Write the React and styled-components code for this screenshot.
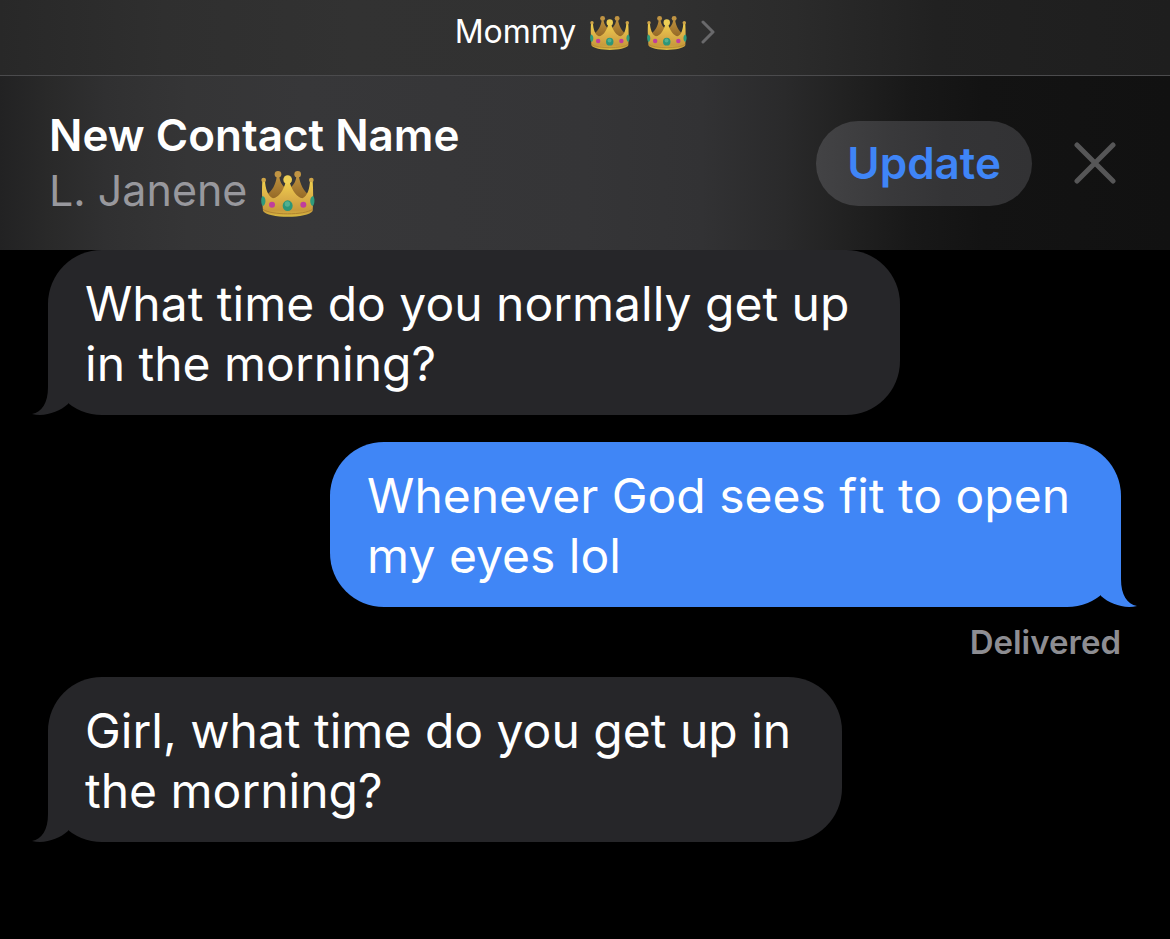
import React from 'react'
import styled, { createGlobalStyle } from 'styled-components'

const messages = [
  { id: 1, mine: false, text: 'What time do you normally get up\nin the morning?' },
  { id: 2, mine: true, text: 'Whenever God sees fit to open\nmy eyes lol', status: 'Delivered' },
  { id: 3, mine: false, text: 'Girl, what time do you get up in\nthe morning?' }
]

const Crown = ({ size }) => (
  <CrownSvg $size={size} viewBox="18 18 162 139" role="img" aria-label="crown">
    <defs>
      <linearGradient id="crownFront" x1="0" y1="0" x2="0" y2="1">
        <stop offset="0" stopColor="#f0d04c" />
        <stop offset="0.45" stopColor="#dcb048" />
        <stop offset="0.82" stopColor="#c89a3c" />
        <stop offset="1" stopColor="#d8ba40" />
      </linearGradient>
      <linearGradient id="crownBack" x1="0" y1="0" x2="0" y2="1">
        <stop offset="0" stopColor="#bc8f3c" />
        <stop offset="1" stopColor="#8f6424" />
      </linearGradient>
    </defs>
    <path d="M36 88 C52 78 62 58 65 36 L73 36 C76 54 84 66 98 72 C112 66 121 54 124 36 L132 36 C136 58 146 78 160 88 L150 108 H48 Z" fill="url(#crownBack)" />
    <circle cx="69" cy="28" r="10" fill="#c09443" />
    <circle cx="128" cy="28" r="10" fill="#c09443" />
    <path d="M22 48 H30 C31 68 38 94 54 100 C72 98 85 76 92 52 H104 C111 76 126 98 142 100 C158 94 164 68 165 48 H173 C175 78 175 108 173 138 C160 161 37 161 24 138 C21 108 20 78 22 48 Z" fill="url(#crownFront)" />
    <path d="M24 133 C48 151 148 151 173 133" fill="none" stroke="#b08430" strokeWidth="3" />
    <circle cx="26" cy="45" r="7" fill="#cfa548" />
    <circle cx="169" cy="45" r="7" fill="#cfa548" />
    <circle cx="98" cy="44" r="13" fill="#edcf55" />
    <path d="M23 93 C34 96 34 119 24 123 C17 118 17 97 23 93Z" fill="#2f9a7c" />
    <path d="M174 93 C163 96 163 119 173 123 C180 118 180 97 174 93Z" fill="#2f9a7c" />
    <circle cx="51" cy="119" r="9" fill="#c03e9c" />
    <circle cx="145" cy="119" r="9" fill="#c03e9c" />
    <ellipse cx="98" cy="122" rx="15" ry="16" fill="#2d9678" />
    <ellipse cx="97" cy="117" rx="8" ry="8" fill="#52b08f" />
  </CrownSvg>
)

const Message = ({ mine, text, status }) => (
  <MessageItem $mine={mine}>
    <Bubble $mine={mine}>
      {text}
      <Tail $mine={mine} viewBox="0 0 36 60" aria-hidden="true">
        <path d="M16 0 V32 C16 48 10 57 0 59 C13 62 27 57 36 49 V0 Z" fill="currentColor" />
      </Tail>
    </Bubble>
    {status && <Status>{status}</Status>}
  </MessageItem>
)

const App = () => (
  <>
    <GlobalStyle />
    <header>
      <TopBar>
        <ContactButton type="button">
          Mommy
          <Crowns>
            <Crown size={40} />
            <Crown size={40} />
          </Crowns>
          <Chevron viewBox="0 0 14 24" aria-hidden="true">
            <path d="M2 2 L12 12 L2 22" />
          </Chevron>
        </ContactButton>
      </TopBar>
      <Banner>
        <BannerText>
          <Title>New Contact Name</Title>
          <Subtitle>
            L. Janene
            <Crown size={54} />
          </Subtitle>
        </BannerText>
        <UpdateButton type="button">Update</UpdateButton>
        <CloseButton type="button" aria-label="Close">
          <CloseIcon viewBox="0 0 42 42" aria-hidden="true">
            <path d="M3 3 L39 39 M39 3 L3 39" />
          </CloseIcon>
        </CloseButton>
      </Banner>
    </header>
    <Thread>
      {messages.map(({ id, ...message }) => (
        <Message key={id} {...message} />
      ))}
    </Thread>
  </>
)

export default App

const GlobalStyle = createGlobalStyle`
  * {
    box-sizing: border-box;
  }
  body {
    margin: 0;
    background-color: #000;
    color: #fff;
    font-family: Inter, "Liberation Sans", sans-serif;
  }
  button {
    border: none;
    padding: 0;
    background: none;
    color: inherit;
    font-family: inherit;
    cursor: pointer;
  }
`
const TopBar = styled.div`
  display: flex;
  justify-content: center;
  padding: 12px 0 24px;
  border-bottom: solid 1px #4b4b4d;
  background: linear-gradient(90deg, #282828 0%, #2f2f2f 14%, #323232 30%, #313131 55%, #2b2b2b 68%, #212121 80%, #1e1e1e 100%);
`
const ContactButton = styled.button`
  display: flex;
  align-items: center;
  height: 39px;
  font-size: 32px;
  line-height: 39px;
`
const Crowns = styled.span`
  display: flex;
  gap: 17px;
  margin: 4px 14px 0;
`
const CrownSvg = styled.svg`
  display: block;
  flex: none;
  width: ${({ $size }) => $size}px;
  height: auto;
`
const Chevron = styled.svg`
  width: 14px;
  height: 24px;
  fill: none;
  stroke: #69696b;
  stroke-width: 3;
  stroke-linecap: round;
  stroke-linejoin: round;
`
const Banner = styled.div`
  display: flex;
  align-items: center;
  min-height: 174px;
  padding: 0 54px 0 49px;
  background: linear-gradient(90deg, #222223 0%, #292929 4%, #303031 9%, #353536 16%, #373739 26%, #353537 50%, #323234 60%, #2a2a2b 67%, #202020 73%, #181818 78%, #131313 84%, #111 100%);
`
const BannerText = styled.div`
  flex: 1;
`
const Title = styled.h1`
  margin: 0;
  font-size: 44px;
  font-weight: 600;
  line-height: 55px;
`
const Subtitle = styled.p`
  display: flex;
  align-items: center;
  gap: 14px;
  height: 55px;
  margin: 0;
  color: #98989d;
  font-size: 43px;
  line-height: 55px;

  ${CrownSvg} {
    margin-top: 8px;
  }
`
const UpdateButton = styled.button`
  height: 85px;
  padding: 0 31px;
  border-radius: 43px;
  background: linear-gradient(90deg, #434345, #39393b 35%, #343436 60%, #323234);
  && {
    color: #3f85f7;
  }
  font-size: 44px;
  font-weight: 600;
`
const CloseButton = styled.button`
  display: flex;
  margin-left: 42px;
`
const CloseIcon = styled.svg`
  width: 42px;
  height: 42px;
  fill: none;
  stroke: #565657;
  stroke-width: 5;
  stroke-linecap: round;
`
const Thread = styled.main`
  display: flex;
  flex-direction: column;
  padding: 0 49px 0 48px;
`
const MessageItem = styled.div`
  display: flex;
  flex-direction: column;
  align-items: ${({ $mine }) => ($mine ? 'flex-end' : 'flex-start')};
  margin-bottom: ${({ $mine }) => ($mine ? 15 : 27)}px;
`
const Bubble = styled.div`
  position: relative;
  padding: 24px 51px 21px 37px;
  border-radius: 54px;
  background-color: ${({ $mine }) => ($mine ? '#4086f6' : '#262629')};
  font-size: 48px;
  line-height: 60px;
  white-space: pre-line;
`
const Tail = styled.svg`
  position: absolute;
  bottom: 0;
  ${({ $mine }) => ($mine ? 'right: -16px; transform: scaleX(-1);' : 'left: -16px;')}
  width: 36px;
  height: 60px;
  color: ${({ $mine }) => ($mine ? '#4086f6' : '#262629')};
`
const Status = styled.div`
  margin-top: 15px;
  color: #8d8d92;
  font-size: 33px;
  font-weight: 600;
  line-height: 40px;
`
